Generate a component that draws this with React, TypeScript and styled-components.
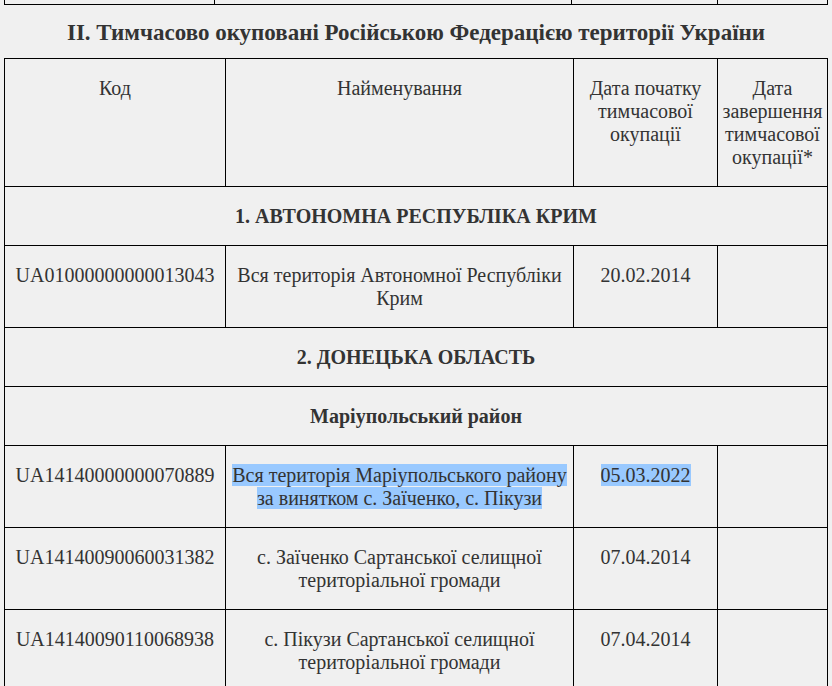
import React from "react";
import styled, {createGlobalStyle} from "styled-components";

const GlobalStyle = createGlobalStyle`
    html, body {
        margin: 0;
        padding: 0;
        background: #f0f0f0;
    }
    body {
        font-family: "Liberation Serif", "Times New Roman", serif;
        color: #333333;
    }
`

type Row =
    | {kind: "section"; title: string}
    | {kind: "data"; code: string; name: string; start: string; end?: string; selected?: string[]};

const rows: Row[] = [
    {kind: "section", title: "1. АВТОНОМНА РЕСПУБЛІКА КРИМ"},
    {kind: "data", code: "UA01000000000013043", name: "Вся територія Автономної Республіки Крим", start: "20.02.2014"},
    {kind: "section", title: "2. ДОНЕЦЬКА ОБЛАСТЬ"},
    {kind: "section", title: "Маріупольський район"},
    {
        kind: "data",
        code: "UA14140000000070889",
        name: "",
        selected: ["Вся територія Маріупольського району", "за винятком с. Заїченко, с. Пікузи"],
        start: "05.03.2022",
    },
    {kind: "data", code: "UA14140090060031382", name: "с. Заїченко Сартанської селищної територіальної громади", start: "07.04.2014"},
    {kind: "data", code: "UA14140090110068938", name: "с. Пікузи Сартанської селищної територіальної громади", start: "07.04.2014"},
];

export default function App() {
    return (
        <Page>
            <GlobalStyle/>
            <Table>
                <colgroup>
                    <col style={{width: 210}}/>
                    <col style={{width: 357}}/>
                    <col style={{width: 146}}/>
                    <col/>
                </colgroup>
                <tbody>
                <tr>
                    <TailCell/>
                    <TailCell/>
                    <TailCell/>
                    <TailCell/>
                </tr>
                </tbody>
            </Table>

            <SectionTitle>II. Тимчасово окуповані Російською Федерацією території України</SectionTitle>

            <Table>
                <colgroup>
                    <col style={{width: 221}}/>
                    <col style={{width: 348}}/>
                    <col style={{width: 144}}/>
                    <col/>
                </colgroup>
                <thead>
                <tr>
                    <Cell>Код</Cell>
                    <Cell>Найменування</Cell>
                    <Cell>Дата початку тимчасової окупації</Cell>
                    <Cell>Дата завершення тимчасової окупації*</Cell>
                </tr>
                </thead>
                <tbody>
                {rows.map((row, i) =>
                    row.kind === "section" ? (
                        <tr key={i}>
                            <GroupCell colSpan={4}>{row.title}</GroupCell>
                        </tr>
                    ) : (
                        <tr key={i}>
                            <Cell>{row.code}</Cell>
                            <Cell>
                                {row.selected
                                    ? row.selected.map((line, j) => (
                                        <React.Fragment key={j}>
                                            {j > 0 && <br/>}
                                            <Selected>{line}{" "}</Selected>
                                        </React.Fragment>
                                    ))
                                    : row.name}
                            </Cell>
                            <Cell>{row.selected ? <Selected>{row.start}</Selected> : row.start}</Cell>
                            <Cell>{row.end}</Cell>
                        </tr>
                    )
                )}
                </tbody>
            </Table>
        </Page>
    );
}

const Page = styled.div`
    padding: 0 4px;
    height: 686px;
    overflow: hidden;
`

const Table = styled.table`
    width: 824px;
    border-collapse: collapse;
    table-layout: fixed;
`

const TailCell = styled.td`
    height: 4px;
    padding: 0;
    border: 1px solid #000;
    border-top: none;
`

const SectionTitle = styled.h2`
    margin: 0;
    padding: 15px 0 12px;
    text-align: center;
    font-size: 23px;
    line-height: 26px;
    font-weight: bold;
`

const Cell = styled.td`
    border: 1px solid #000;
    padding: 18px 4px 17px;
    font-size: 20px;
    line-height: 23px;
    font-weight: normal;
    text-align: center;
    vertical-align: top;
`

const GroupCell = styled(Cell)`
    font-weight: bold;
`

const Selected = styled.span`
    background: #99c9ff;
`
